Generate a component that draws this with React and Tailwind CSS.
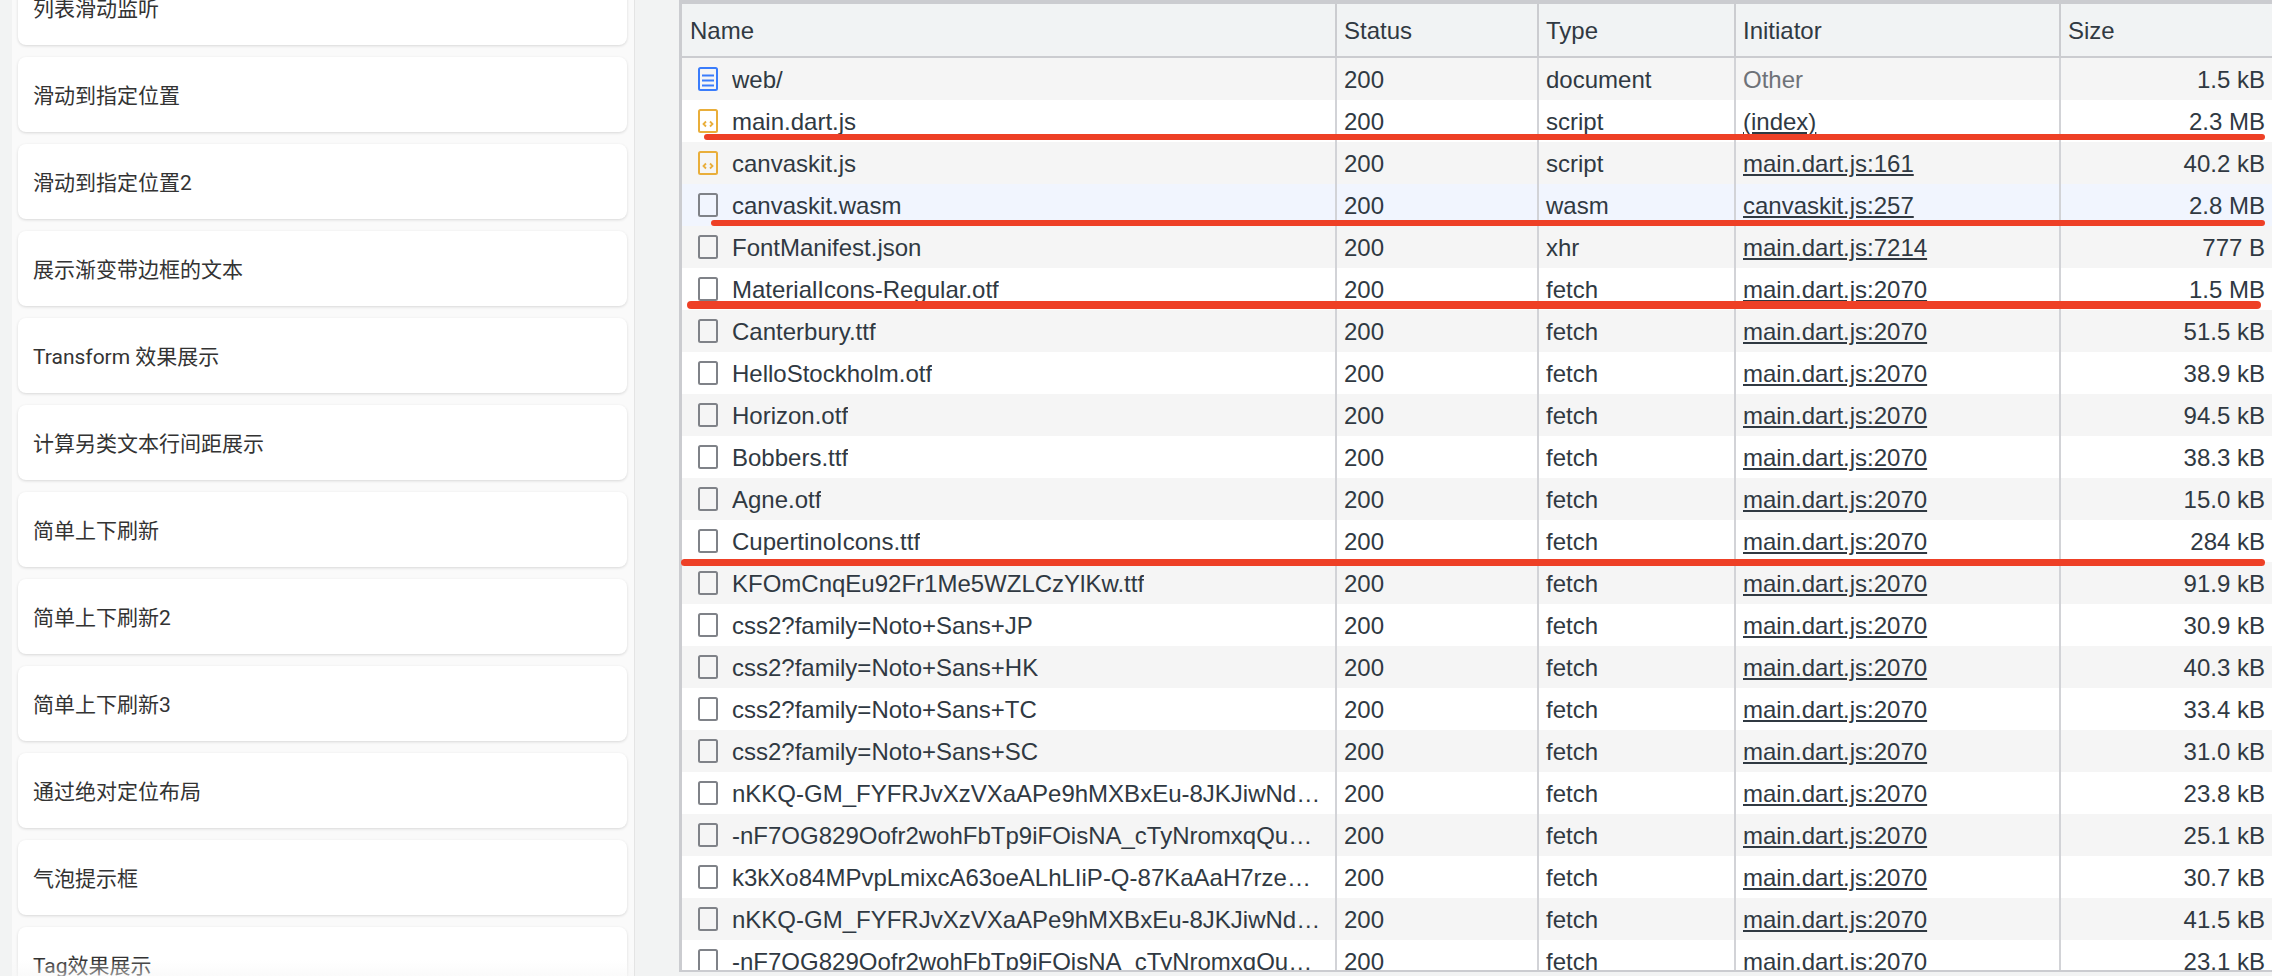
import React from "react";

const cards = [
  "列表滑动监听",
  "滑动到指定位置",
  "滑动到指定位置2",
  "展示渐变带边框的文本",
  "Transform 效果展示",
  "计算另类文本行间距展示",
  "简单上下刷新",
  "简单上下刷新2",
  "简单上下刷新3",
  "通过绝对定位布局",
  "气泡提示框",
  "Tag效果展示",
];

const rows = [
  { name: "web/", type: "document", init: "Other", size: "1.5 kB", icon: "doc" },
  { name: "main.dart.js", type: "script", init: "(index)", size: "2.3 MB", icon: "js" },
  { name: "canvaskit.js", type: "script", init: "main.dart.js:161", size: "40.2 kB", icon: "js" },
  { name: "canvaskit.wasm", type: "wasm", init: "canvaskit.js:257", size: "2.8 MB", selected: true },
  { name: "FontManifest.json", type: "xhr", init: "main.dart.js:7214", size: "777 B" },
  { name: "MaterialIcons-Regular.otf", type: "fetch", init: "main.dart.js:2070", size: "1.5 MB" },
  { name: "Canterbury.ttf", type: "fetch", init: "main.dart.js:2070", size: "51.5 kB" },
  { name: "HelloStockholm.otf", type: "fetch", init: "main.dart.js:2070", size: "38.9 kB" },
  { name: "Horizon.otf", type: "fetch", init: "main.dart.js:2070", size: "94.5 kB" },
  { name: "Bobbers.ttf", type: "fetch", init: "main.dart.js:2070", size: "38.3 kB" },
  { name: "Agne.otf", type: "fetch", init: "main.dart.js:2070", size: "15.0 kB" },
  { name: "CupertinoIcons.ttf", type: "fetch", init: "main.dart.js:2070", size: "284 kB" },
  { name: "KFOmCnqEu92Fr1Me5WZLCzYlKw.ttf", type: "fetch", init: "main.dart.js:2070", size: "91.9 kB" },
  { name: "css2?family=Noto+Sans+JP", type: "fetch", init: "main.dart.js:2070", size: "30.9 kB" },
  { name: "css2?family=Noto+Sans+HK", type: "fetch", init: "main.dart.js:2070", size: "40.3 kB" },
  { name: "css2?family=Noto+Sans+TC", type: "fetch", init: "main.dart.js:2070", size: "33.4 kB" },
  { name: "css2?family=Noto+Sans+SC", type: "fetch", init: "main.dart.js:2070", size: "31.0 kB" },
  { name: "nKKQ-GM_FYFRJvXzVXaAPe9hMXBxEu-8JKJiwNd4Wg.otf", type: "fetch", init: "main.dart.js:2070", size: "23.8 kB" },
  { name: "-nF7OG829Oofr2wohFbTp9iFOisNA_cTyNromxqQuE2s.otf", type: "fetch", init: "main.dart.js:2070", size: "25.1 kB" },
  { name: "k3kXo84MPvpLmixcA63oeALhLIiP-Q-87KaAaH7rzeMo.otf", type: "fetch", init: "main.dart.js:2070", size: "30.7 kB" },
  { name: "nKKQ-GM_FYFRJvXzVXaAPe9hMXBxEu-8JKJiwNd7Qa.otf", type: "fetch", init: "main.dart.js:2070", size: "41.5 kB" },
  { name: "-nF7OG829Oofr2wohFbTp9iFOisNA_cTyNromxqQuE4w.otf", type: "fetch", init: "main.dart.js:2070", size: "23.1 kB" },
];

// where the red marker strokes sit over the table
const marks = [
  "top-[134px] left-[704px] w-[1561px] h-[6px]",
  "top-[220px] left-[711px] w-[1554px] h-[6px]",
  "top-[301px] left-[687px] w-[1574px] h-[8px]",
  "top-[559px] left-[681px] w-[1584px] h-[7px]",
];

function FileIcon({ kind }) {
  const color = kind === "doc" ? "#3a7cfb" : kind === "js" ? "#e9ae3a" : "#7f8288";
  return (
    <svg width="20" height="24" viewBox="0 0 20 24" className="shrink-0">
      <rect x="1" y="1" width="18" height="22" rx="1.5" fill="none" stroke={color} strokeWidth="2" />
      {kind === "doc" && <path d="M4 8.5h12M4 13.5h12M4 18.5h12" stroke={color} strokeWidth="1.8" fill="none" />}
      {kind === "js" && <path d="M8 12.5L5.5 15L8 17.5M12 12.5L14.5 15L12 17.5" stroke={color} strokeWidth="1.8" fill="none" />}
    </svg>
  );
}

function Row({ row, index }) {
  const bg = row.selected ? "bg-[#f1f5fe]" : index % 2 === 0 ? "bg-[#f5f5f5]" : "bg-white";
  return (
    <div className={`grid grid-cols-[653px_202px_197px_325px_1fr] h-[42px] shrink-0 items-stretch ${bg}`}>
      <div className="flex items-center pl-[16px] pr-[7px] gap-[14px] min-w-0">
        <FileIcon kind={row.icon} />
        <span className="truncate pt-[1px]">{row.name}</span>
      </div>
      <div className="flex items-center pl-[7px] pt-[1px] border-l-2 border-[#d2d3d7]">200</div>
      <div className="flex items-center pl-[7px] pt-[1px] border-l-2 border-[#d2d3d7]">{row.type}</div>
      <div className="flex items-center pl-[7px] pt-[1px] border-l-2 border-[#d2d3d7]">
        {row.init === "Other" ? (
          <span className="text-[#6e7278]">Other</span>
        ) : (
          <span className="underline">{row.init}</span>
        )}
      </div>
      <div className="flex items-center justify-end pr-[7px] pt-[1px] border-l-2 border-[#d2d3d7]">{row.size}</div>
    </div>
  );
}

export default function App() {
  return (
    <div className="relative flex h-[976px] w-[2272px] overflow-hidden bg-[#f2f3f3]">
      {/* list of demo pages */}
      <div className="w-[635px] shrink-0 pl-[12px] h-full">
        <div className="h-full bg-[#fafafa] border-r border-[#e4e4e4] pl-[6px] pr-[7px] overflow-hidden">
          <div className="flex flex-col gap-[12px] -mt-[30px]">
            {cards.map((title) => (
              <div
                key={title}
                className="h-[75px] shrink-0 flex items-center pl-[15px] pt-[5px] bg-white rounded-[8px] shadow-[0_1px_3px_rgba(0,0,0,0.14)] text-[21px] text-[#333] font-['Roboto','Noto_Sans_CJK_SC',sans-serif]"
              >
                {title}
              </div>
            ))}
          </div>
        </div>
      </div>

      {/* soft fade along the bottom of the list */}
      <div className="absolute left-[12px] bottom-0 w-[622px] h-[16px] bg-gradient-to-b from-transparent to-[#f6f6f6]/50" />

      {/* devtools network table */}
      <div className="ml-[44px] flex-1 min-w-0 h-[972px] flex flex-col overflow-hidden border-t-4 border-l-[3px] border-b-2 border-[#cbccd0] text-[24px] text-[#303942] font-['Liberation_Sans',sans-serif]">
        <div className="grid grid-cols-[653px_202px_197px_325px_1fr] h-[54px] shrink-0 bg-[#f1f3f4] border-b-2 border-[#cbccd0]">
          <div className="flex items-center pl-[8px] pt-[1px]">Name</div>
          <div className="flex items-center pl-[7px] pt-[1px] border-l-2 border-[#cbccd0]">Status</div>
          <div className="flex items-center pl-[7px] pt-[1px] border-l-2 border-[#cbccd0]">Type</div>
          <div className="flex items-center pl-[7px] pt-[1px] border-l-2 border-[#cbccd0]">Initiator</div>
          <div className="flex items-center pl-[7px] pt-[1px] border-l-2 border-[#cbccd0]">Size</div>
        </div>
        {rows.map((row, i) => (
          <Row key={i} row={row} index={i} />
        ))}
      </div>

      {marks.map((m) => (
        <div key={m} className={`absolute rounded-full bg-[#ee4026] ${m}`} />
      ))}
    </div>
  );
}
